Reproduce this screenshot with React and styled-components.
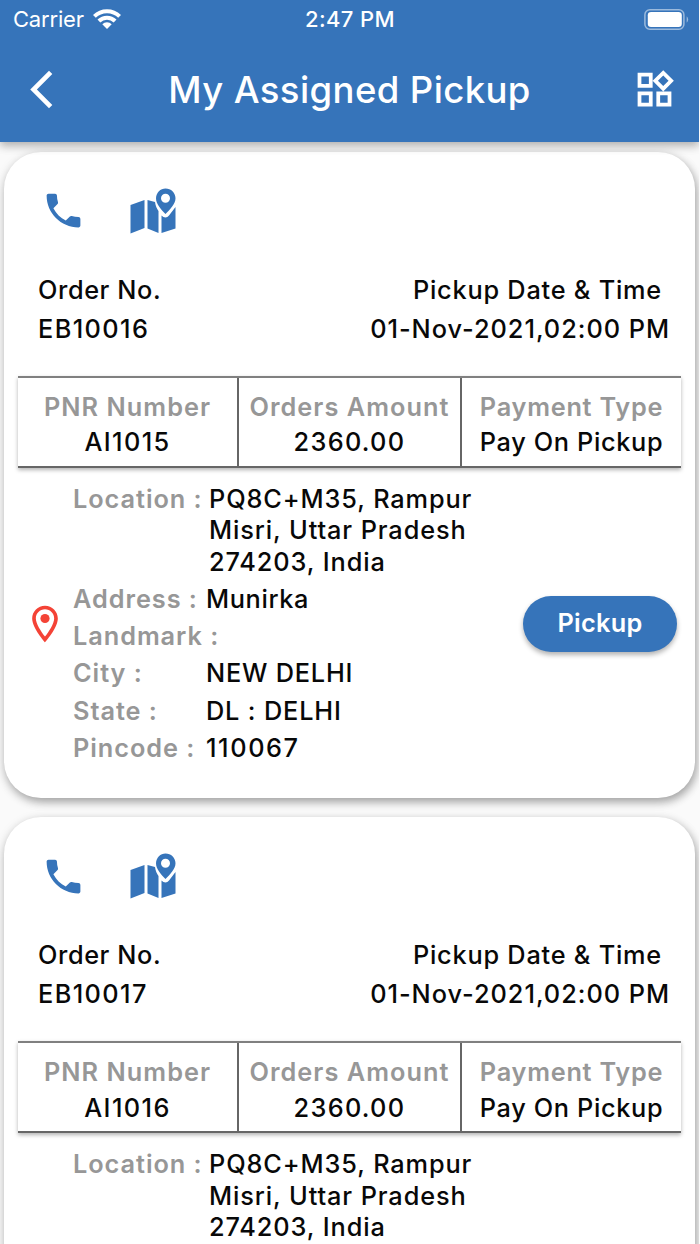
import React from "react";
import styled, { createGlobalStyle } from "styled-components";
import {
	MdArrowBackIosNew,
	MdOutlineWidgets,
	MdPhone,
	MdOutlineLocationOn,
} from "react-icons/md";

const orders = [
	{ id: "EB10016", pnr: "AI1015" },
	{ id: "EB10017", pnr: "AI1016" },
];

const MapIcon = () => (
	<svg width='46' height='46' viewBox='0 0 46 46' fill='#3674ba'>
		<path d='M0.5 17L14.5 12V40L0.5 45.5Z' />
		<path d='M17.5 12L25 14C25.5 18 27 21 28.5 23V45L17.5 40.5Z' />
		<path d='M31.5 27.5C34 30 37 30 39 27.500L45.5 19V40.5L31.5 45Z' />
		<path
			fillRule='evenodd'
			d='M35.5 0.500C41 0.500 45.500 4.700 45.500 10.300C45.500 16 40 21.500 35.500 26C31 21.500 26 16 26 10.300C26 4.700 30.500 0.500 35.500 0.500ZM35.500 5.800A4.500 4.500 0 1 0 35.500 14.800A4.500 4.500 0 1 0 35.500 5.800Z'
		/>
	</svg>
);

const WifiIcon = () => (
	<svg width='28' height='20' viewBox='0 0 28 20' fill='none' stroke='#fff' strokeWidth='4'>
		<path d='M1.400 7.400A18 18 0 0 1 26.600 7.400' />
		<path d='M5.900 12A11.500 11.500 0 0 1 22.100 12' />
		<path d='M14 20L9.300 15.300A6.500 6.500 0 0 1 18.700 15.300Z' fill='#fff' stroke='none' />
	</svg>
);

const BatteryIcon = () => (
	<svg width='45' height='21' viewBox='0 0 45 21'>
		<rect x='0.900' y='0.800' width='39' height='19.400' rx='5' fill='none' stroke='#9bbadd' strokeWidth='1.500' />
		<rect x='3.800' y='3' width='34' height='15' rx='3.300' fill='#fff' />
		<path d='M42.700 7.200A4.500 4.500 0 0 1 42.700 13.800Z' fill='#9bbadd' />
	</svg>
);

const OrderCard = ({ order }) => (
	<Card>
		<Actions>
			<MdPhone size={45} />
			<MapIcon />
		</Actions>

		<Summary>
			<div>
				<Text $ls={0.6}>Order No.</Text>
				<Text $ls={1.4}>{order.id}</Text>
			</div>
			<DateBlock>
				<Text $ls={0.78}>Pickup Date &amp; Time</Text>
				<Text $ls={0.98}>01-Nov-2021,02:00 PM</Text>
			</DateBlock>
		</Summary>

		<Table>
			<Cell>
				<Label $ls={1.05}>PNR Number</Label>
				<Text $ls={1.4}>{order.pnr}</Text>
			</Cell>
			<Cell>
				<Label $ls={1.05}>Orders Amount</Label>
				<Text $ls={1.3}>2360.00</Text>
			</Cell>
			<Cell>
				<Label $ls={0.75}>Payment Type</Label>
				<Text $ls={0.65}>Pay On Pickup</Text>
			</Cell>
		</Table>

		<Details>
			<Pin>
				<MdOutlineLocationOn size={44} />
			</Pin>
			<Fields>
				<Location>
					<Label>Location :</Label>
					<Text $ls={0.9}>
						PQ8C+M35, Rampur
						<br />
						Misri, Uttar Pradesh
						<br />
						274203, India
					</Text>
				</Location>
				<Field>
					<Label>Address :</Label>
					<Text $ls={0.65}>Munirka</Text>
				</Field>
				<Field>
					<Label>Landmark :</Label>
				</Field>
				<Field>
					<Label>City :</Label>
					<Text $ls={0.8}>NEW DELHI</Text>
				</Field>
				<Field>
					<Label>State :</Label>
					<Text $ls={0.85}>DL : DELHI</Text>
				</Field>
				<Field>
					<Label>Pincode :</Label>
					<Text $ls={1.6}>110067</Text>
				</Field>
			</Fields>
			<Button>Pickup</Button>
		</Details>
	</Card>
);

const App = () => {
	return (
		<Wrapper>
			<GlobalStyle />
			<Header>
				<StatusBar>
					<Carrier>
						Carrier
						<WifiIcon />
					</Carrier>
					<Clock>2:47 PM</Clock>
					<Battery>
						<BatteryIcon />
					</Battery>
				</StatusBar>
				<NavBar>
					<MdArrowBackIosNew size={45} />
					<h1>My Assigned Pickup</h1>
					<MdOutlineWidgets size={45} />
				</NavBar>
			</Header>
			<List>
				{orders.map((order) => (
					<OrderCard key={order.id} order={order} />
				))}
			</List>
		</Wrapper>
	);
};

const GlobalStyle = createGlobalStyle`
	* {
		box-sizing: border-box;
	}
	body {
		margin: 0;
		overflow: hidden;
		background: #fafafa;
		font-family: Inter, "Liberation Sans", sans-serif;
	}
`;

const Wrapper = styled.div`
	width: 699px;
	height: 1244px;
	overflow: hidden;
	background: #fafafa;
`;

const Header = styled.header`
	position: relative;
	z-index: 1;
	height: 142px;
	background: #3674ba;
	color: white;
	box-shadow: 0 4px 8px rgba(0, 0, 0, 0.22), 0 2px 12px rgba(0, 0, 0, 0.12);
`;

const StatusBar = styled.div`
	display: grid;
	grid-template-columns: 1fr auto 1fr;
	align-items: center;
	height: 38px;
	padding: 0 10px 0 13px;
	font-size: 22px;
`;

const Carrier = styled.div`
	display: flex;
	align-items: center;
	gap: 9px;
	letter-spacing: -0.2px;
`;

const Clock = styled.div`
	margin-right: 2px;
	font-weight: 500;
	letter-spacing: 0.4px;
`;

const Battery = styled.div`
	display: flex;
	justify-content: flex-end;
`;

const NavBar = styled.div`
	display: flex;
	align-items: center;
	justify-content: space-between;
	height: 103px;
	padding: 0 22px 0 19px;
	h1 {
		margin: 0 0 0 3px;
		font-size: 36.5px;
		font-weight: 500;
		letter-spacing: 0.4px;
	}
`;

const List = styled.main`
	display: flex;
	flex-direction: column;
	gap: 19px;
	padding: 9.5px 4px 0;
`;

const Card = styled.section`
	flex: none;
	height: 646.5px;
	border-radius: 37px;
	background: white;
	box-shadow: 2px 4px 8px rgba(0, 0, 0, 0.28), 0 3px 12px rgba(0, 0, 0, 0.12);
`;

const Actions = styled.div`
	display: flex;
	align-items: center;
	gap: 44px;
	height: 118px;
	padding-left: 37px;
	color: #3674ba;
`;

const Text = styled.div`
	color: #080808;
	font-size: 25.3px;
	font-weight: 500;
	line-height: 31.6px;
	letter-spacing: ${({ $ls }) => $ls ?? 0.5}px;
	white-space: nowrap;
`;

const Label = styled(Text)`
	color: #979797;
	font-weight: 600;
	letter-spacing: ${({ $ls }) => $ls ?? 0.95}px;
`;

const Summary = styled.div`
	display: flex;
	justify-content: space-between;
	height: 106px;
	padding: 4px 25px 0 34px;
	${Text} + ${Text} {
		margin-top: 7.5px;
	}
`;

const DateBlock = styled.div`
	text-align: right;
	${Text}:first-child {
		margin-right: 8px;
	}
`;

const Table = styled.div`
	display: grid;
	grid-template-columns: 219px 223px 221px;
	height: 92px;
	margin-left: 14px;
	width: 663px;
	border-top: 2px solid #808080;
	border-bottom: 2px solid #666;
	box-shadow: 0 2px 4px rgba(0, 0, 0, 0.3);
`;

const Cell = styled.div`
	padding-top: 13px;
	text-align: center;
	& + & {
		border-left: 2px solid #666;
	}
	${Text} + ${Text} {
		margin-top: 4px;
	}
`;

const Details = styled.div`
	display: flex;
	align-items: center;
	height: 282px;
	margin-top: 15px;
	padding: 0 18px 0 19px;
`;

const Pin = styled.div`
	display: flex;
	width: 50px;
	color: #f44336;
`;

const Fields = styled.div`
	flex: 1;
	align-self: flex-start;
`;

const Field = styled.div`
	display: grid;
	grid-template-columns: 133px 1fr;
	height: 37.3px;
	align-items: center;
`;

const Location = styled.div`
	display: grid;
	grid-template-columns: 136px 1fr;
	margin-bottom: 2.5px;
`;

const Button = styled.button`
	width: 154px;
	height: 56px;
	padding: 0 0 3px;
	border: none;
	border-radius: 28px;
	background: #3674ba;
	color: white;
	font-family: inherit;
	font-size: 25.3px;
	font-weight: 600;
	letter-spacing: 0.3px;
	box-shadow: 0 3px 5px rgba(0, 0, 0, 0.3);
`;

export default App;
